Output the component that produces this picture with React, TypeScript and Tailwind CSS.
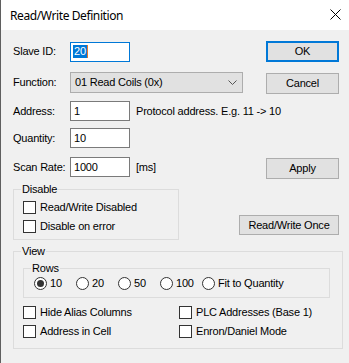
import React from "react";

function Check({ label }: { label: string }) {
  return (
    <div className="flex items-center h-[13px]">
      <div className="w-[13px] h-[13px] border border-[#333333] bg-white shrink-0" />
      <span className="ml-[4px] whitespace-nowrap">{label}</span>
    </div>
  );
}

function Radio({ label, checked, w }: { label: string; checked?: boolean; w?: string }) {
  return (
    <div className={"flex items-center h-[13px] " + (w ?? "")}>
      <div className="w-[13px] h-[13px] rounded-full border border-[#333333] bg-white shrink-0 flex items-center justify-center">
        {checked && <div className="w-[7px] h-[7px] rounded-full bg-[#333333]" />}
      </div>
      <span className="ml-[3px] whitespace-nowrap">{label}</span>
    </div>
  );
}

function Btn({ children, cls }: { children: React.ReactNode; cls: string }) {
  return (
    <div className={"flex items-center justify-center bg-[#e1e1e1] shrink-0 " + cls}>{children}</div>
  );
}

export default function App() {
  return (
    <div className="w-[349px] h-[363px] overflow-hidden bg-[#f0f0f0] border-l border-[#5f5f5f] text-black text-[11px] leading-[13px] tracking-[-0.2px] font-['Liberation_Sans',Arial,sans-serif]">
      <div className="h-[30px] bg-white flex items-center justify-between pl-[9px] pr-[8px]">
        <span className="font-['Noto_Sans',sans-serif] text-[12px] tracking-[-0.4px]">Read/Write Definition</span>
        <svg width="11" height="11" viewBox="0 0 11 11" className="mt-[-1px]">
          <path d="M0.5 0.5 L10.5 10.5 M10.5 0.5 L0.5 10.5" stroke="#000" strokeWidth="1" />
        </svg>
      </div>
      <div className="pl-[12px] pr-[10px]">
        <div className="mt-[11px] flex items-center h-[21px]">
          <span className="w-[57px]">Slave ID:</span>
          <div className="w-[60px] h-[20px] border border-[#0078d7] bg-white flex items-center pl-[2px]">
            <span className="bg-[#0078d7] text-white px-[1px] leading-[13px]">20</span>
            <span className="w-[1px] h-[13px] bg-[#e8792a]" />
          </div>
          <Btn cls="ml-auto w-[73px] h-[21px] border-2 border-[#0078d7]">OK</Btn>
        </div>
        <div className="mt-[9px] flex items-center h-[22px]">
          <span className="w-[57px]">Function:</span>
          <div className="w-[173px] h-[21px] border border-[#adadad] bg-[#e1e1e1] flex items-center pl-[4px] pr-[5px]">
            <span>01 Read Coils (0x)</span>
            <svg width="9" height="5" viewBox="0 0 9 5" className="ml-auto mt-[1px]">
              <path d="M0.5 0.5 L4.5 4.5 L8.5 0.5" stroke="#555" strokeWidth="1" fill="none" />
            </svg>
          </div>
          <Btn cls="ml-auto w-[73px] h-[21px] border border-[#adadad] mt-[2px]">Cancel</Btn>
        </div>
        <div className="mt-[8px] flex items-center h-[20px]">
          <span className="w-[57px]">Address:</span>
          <div className="w-[60px] h-[20px] border border-[#7a7a7a] bg-white flex items-center pl-[3px]">1</div>
          <span className="ml-[6px] whitespace-nowrap">Protocol address. E.g. 11 -&gt; 10</span>
        </div>
        <div className="mt-[7px] flex items-center h-[20px]">
          <span className="w-[57px]">Quantity:</span>
          <div className="w-[60px] h-[20px] border border-[#7a7a7a] bg-white flex items-center pl-[3px]">10</div>
        </div>
        <div className="mt-[9px] flex items-start h-[22px]">
          <span className="w-[57px] mt-[4px]">Scan Rate:</span>
          <div className="w-[60px] h-[20px] border border-[#7a7a7a] bg-white flex items-center pl-[3px]">1000</div>
          <span className="ml-[6px] mt-[4px]">[ms]</span>
          <Btn cls="ml-auto w-[73px] h-[21px] border border-[#adadad] mt-[1px]">Apply</Btn>
        </div>
        <div className="mt-[4px] flex items-start">
          <fieldset className="w-[166px] border border-[#dcdcdc]">
            <legend className="ml-[7px] px-[1px] leading-[13px]">Disable</legend>
            <div className="pl-[9px] pt-[5px] pb-[6px] flex flex-col gap-[6px]">
              <Check label="Read/Write Disabled" />
              <Check label="Disable on error" />
            </div>
          </fieldset>
          <Btn cls="ml-auto mt-[32px] w-[100px] h-[20px] border border-[#adadad]">Read/Write Once</Btn>
        </div>
        <fieldset className="mt-[5px] w-[330px] border border-[#dcdcdc]">
          <legend className="ml-[7px] px-[1px] leading-[13px]">View</legend>
          <div className="pl-[9px] pt-[4px] pb-[10px]">
            <fieldset className="w-[307px] border border-[#dcdcdc]">
              <legend className="ml-[7px] px-[1px] leading-[13px]">Rows</legend>
              <div className="pl-[10px] pt-[2px] pb-[7px] flex">
                <Radio label="10" checked w="w-[42px]" />
                <Radio label="20" w="w-[42px]" />
                <Radio label="50" w="w-[42px]" />
                <Radio label="100" w="w-[42px]" />
                <Radio label="Fit to Quantity" />
              </div>
            </fieldset>
            <div className="mt-[8px] grid grid-cols-[156px_1fr] gap-y-[6px]">
              <Check label="Hide Alias Columns" />
              <Check label="PLC Addresses (Base 1)" />
              <Check label="Address in Cell" />
              <Check label="Enron/Daniel Mode" />
            </div>
          </div>
        </fieldset>
      </div>
    </div>
  );
}
